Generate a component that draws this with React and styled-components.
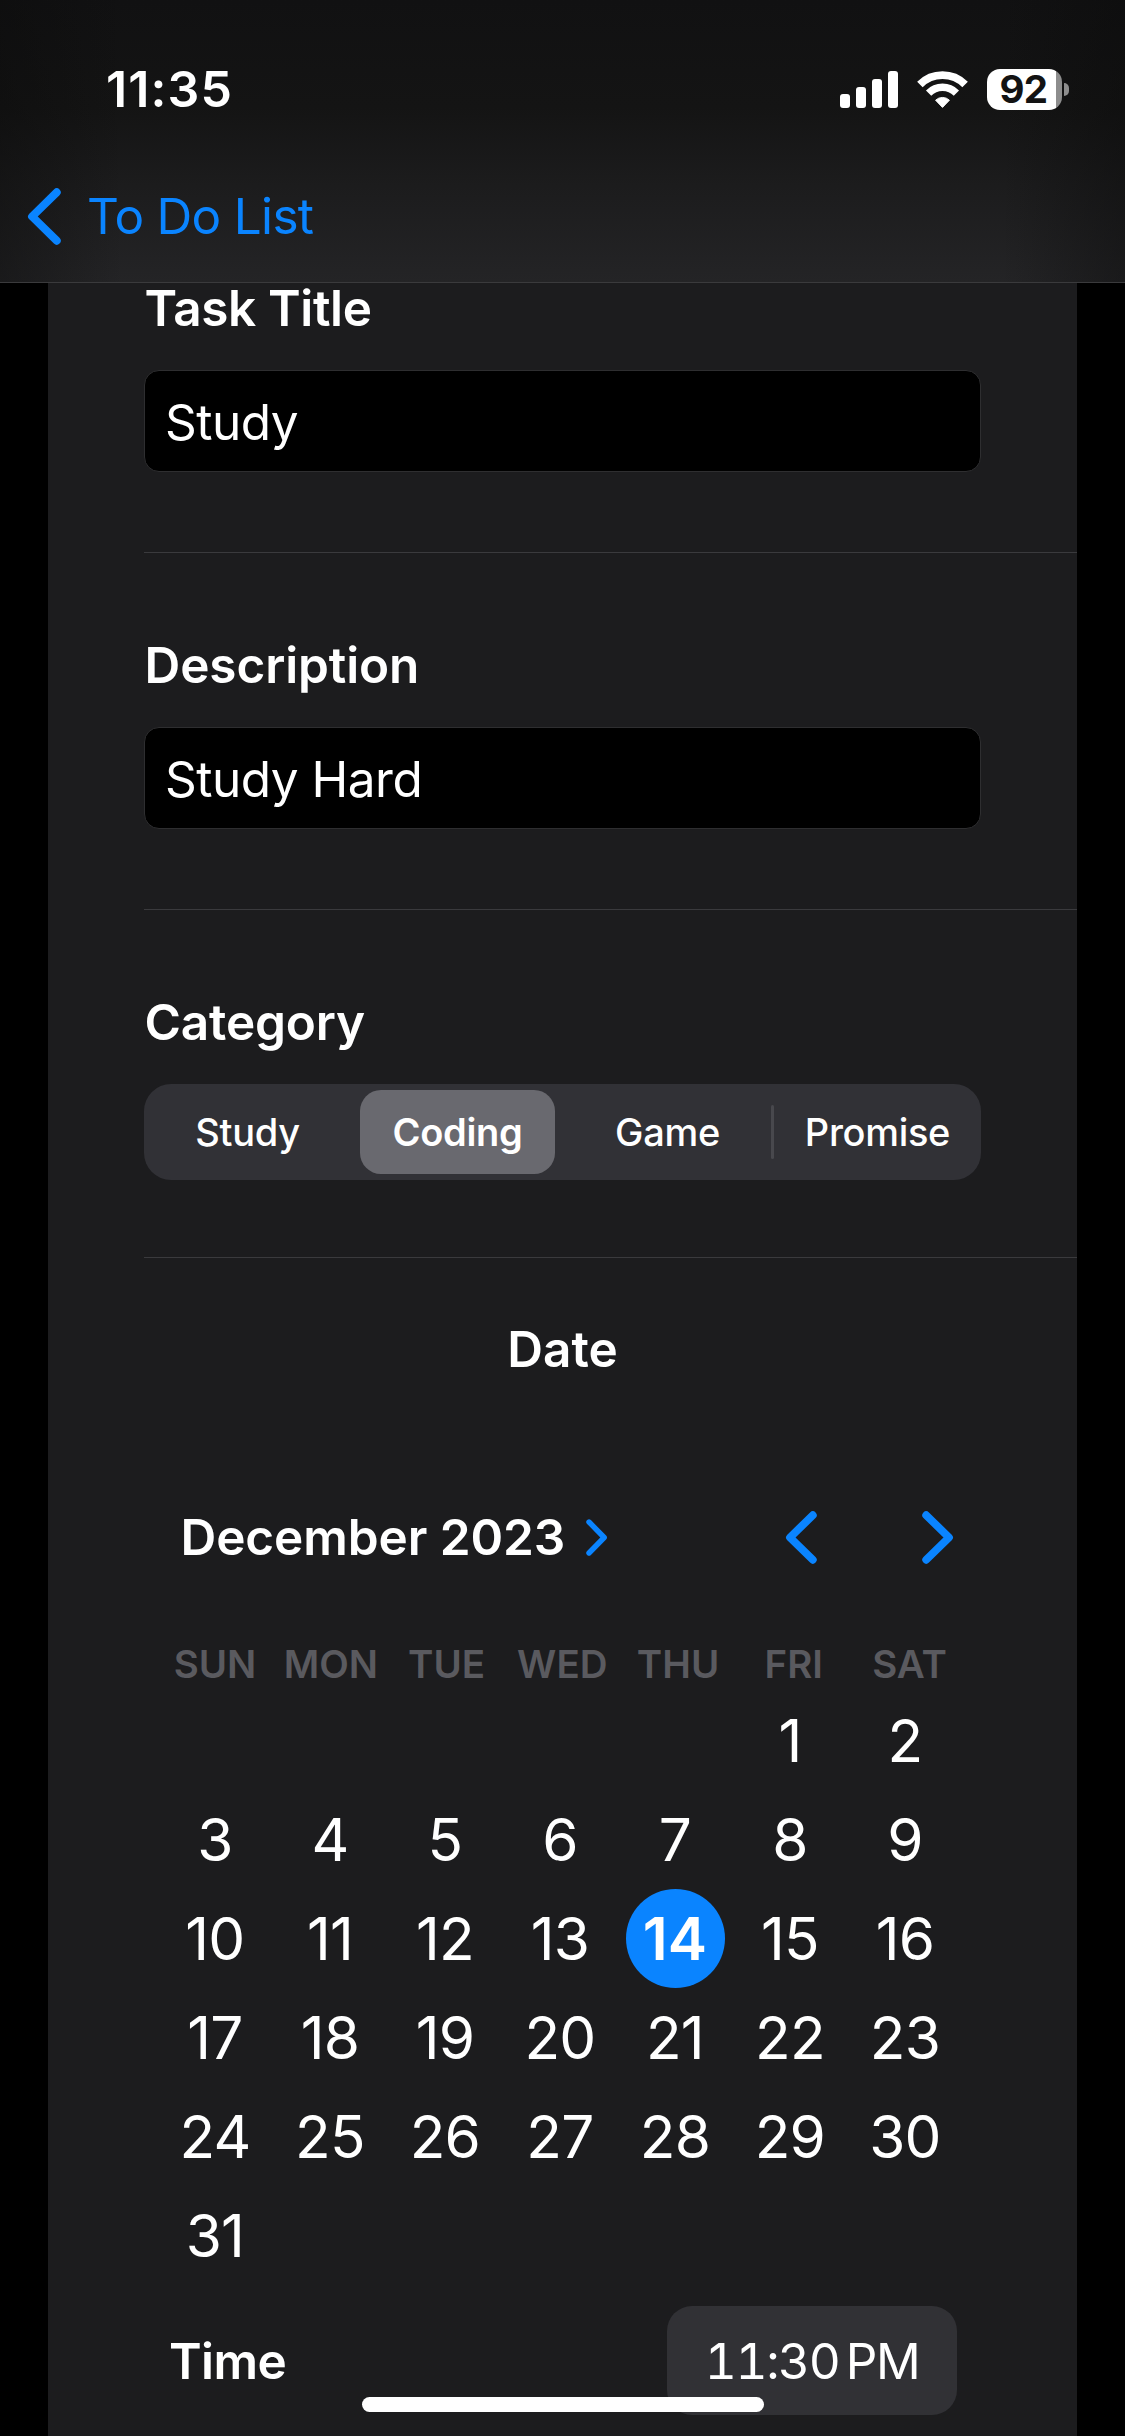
import React, { useState } from 'react';
import styled, { createGlobalStyle, css } from 'styled-components';

const BLUE = '#0a84ff';

const GlobalStyle = createGlobalStyle`
  *, *::before, *::after { box-sizing: border-box; }
  html, body { margin: 0; background: #000; }
  body { overflow: hidden; }
  button, input { font: inherit; color: inherit; border: 0; background: none; padding: 0; margin: 0; letter-spacing: inherit; }
`;

const Screen = styled.div`
  position: relative;
  width: 1125px;
  height: 2436px;
  overflow: hidden;
  background: #000;
  color: #fff;
  font-family: Inter, "Liberation Sans", sans-serif;
  font-size: 49.5px;
  line-height: 60px;
`;

const Header = styled.header`
  position: relative;
  z-index: 2;
  height: 283px;
  padding-top: 59px;
  border-bottom: 1px solid #3a3a3c;
  background:
    linear-gradient(90deg, rgba(10, 10, 10, 0.4), rgba(10, 10, 10, 0) 11%, rgba(10, 10, 10, 0) 89%, rgba(10, 10, 10, 0.4)),
    linear-gradient(180deg, #111112 0%, #141414 38%, #1c1c1d 66%, #242426 100%);
`;

const StatusBar = styled.div`
  display: flex;
  align-items: center;
  height: 60px;
  padding: 0 56px 0 106px;
`;

const Clock = styled.span`
  margin-right: auto;
  font-size: 50px;
  font-weight: 600;
  letter-spacing: 1.1px;
`;

const StatusIcons = styled.div`
  display: flex;
  align-items: center;
  gap: 19px;
`;

const Battery = styled.div`
  display: flex;
  align-items: center;
  gap: 2px;
`;

const BatteryBody = styled.div`
  display: grid;
  place-items: center;
  width: 75px;
  height: 41px;
  padding-right: 2px;
  border-radius: 13px;
  background: linear-gradient(90deg, #fff 69px, #8d8d8d 69px);
  color: #131313;
  font-size: 38.5px;
  font-weight: 700;
  line-height: 41px;
  letter-spacing: -0.6px;
`;

const BatteryCap = styled.div`
  width: 5px;
  height: 13px;
  border-radius: 0 5px 5px 0;
  background: #8d8d8d;
`;

const BackButton = styled.button`
  display: flex;
  align-items: center;
  gap: 26px;
  height: 60px;
  margin: 67px 0 0 27px;
  color: ${BLUE};
  letter-spacing: -0.7px;
`;

const Card = styled.main`
  width: 1029px;
  height: 2300px;
  margin: -87px 0 0 48px;
  background: #1c1c1e;
`;

const Section = styled.section`
  margin-left: 96px;
  padding: 82px 96px ${(p) => p.$bottom || 80}px 0;
  border-bottom: 1px solid #3a3a3d;
`;

const Label = styled.h2`
  margin: 0 0 ${(p) => p.$gap || 0}px;
  font-size: inherit;
  font-weight: 600;
  letter-spacing: ${(p) => p.$track || 0}px;
`;

const SectionLabel = styled(Label)`
  padding-left: 0.6px;
`;

const Field = styled.input`
  display: block;
  width: 100%;
  height: 102px;
  padding: 1px 20px 0;
  border: 1px solid #2e2e30;
  border-radius: 15px;
  background: #000;
  outline: none;
  letter-spacing: -0.5px;
`;

const Segments = styled.div`
  display: flex;
  align-items: center;
  height: 96px;
  padding: 6px;
  border-radius: 27px;
  background: #313136;
  font-size: 38px;
  font-weight: 500;
`;

const Segment = styled.button`
  flex: 1;
  height: 84px;
  border-radius: 21px;
  letter-spacing: -0.3px;
  ${(p) => p.$active && css`
    background: #69696f;
    font-weight: 600;
  `}
`;

const SegmentRule = styled.i`
  width: 3px;
  height: 54px;
  margin: 0 6px;
  border-radius: 2px;
  background: ${(p) => (p.$visible ? '#48484d' : 'transparent')};
`;

const DateSection = styled.section`
  padding-top: 61px;
`;

const CenterLabel = styled(Label)`
  text-align: center;
`;

const MonthBar = styled.div`
  display: flex;
  align-items: center;
  height: 60px;
  margin-top: 128px;
  padding: 0 123.5px 0 132.5px;
`;

const MonthButton = styled.button`
  display: flex;
  align-items: center;
  gap: 21px;
  margin-right: auto;
  font-weight: 600;
  letter-spacing: -0.08px;
`;

const ArrowButton = styled.button`
  display: flex;
  & + & { margin-left: 105px; }
`;

const Weekdays = styled.div`
  display: grid;
  grid-template-columns: repeat(7, 115.75px);
  margin: 73px 0 3px 109.2px;
  color: #5a5a5f;
  font-size: 38.5px;
  font-weight: 600;
  line-height: 48px;
  text-align: center;
`;

const Days = styled.div`
  display: grid;
  grid-template-columns: repeat(7, 115px);
  grid-auto-rows: 99px;
  justify-items: center;
  margin-left: 110px;
`;

const Day = styled.button`
  width: 99px;
  height: 99px;
  border-radius: 50%;
  font-size: 58.5px;
  letter-spacing: -0.8px;
  text-indent: -1.2px;
  grid-column-start: ${(p) => p.$first || 'auto'};
  ${(p) => p.$selected && css`
    background: ${BLUE};
    font-size: 59px;
    font-weight: 600;
    letter-spacing: 0;
  `}
`;

const TimeRow = styled.div`
  display: flex;
  align-items: center;
  justify-content: space-between;
  margin-top: 21px;
  padding: 0 120px 0 121px;
`;

const TimeButton = styled.button`
  width: 290px;
  height: 109px;
  border-radius: 25px;
  background: #313135;
  font-variant-numeric: tabular-nums;
  letter-spacing: -1.4px;
  word-spacing: -5.6px;
`;

const HomeIndicator = styled.div`
  position: absolute;
  z-index: 3;
  left: 362px;
  bottom: 24px;
  width: 402px;
  height: 15px;
  border-radius: 8px;
  background: #fff;
`;

function Chevron({ w, h, stroke, right }) {
  const r = stroke / 2 + 0.3;
  const pts = right
    ? `${r},${r} ${w - r - 0.8},${h / 2} ${r},${h - r}`
    : `${w - r},${r} ${r + 0.8},${h / 2} ${w - r},${h - r}`;
  return (
    <svg width={w} height={h} viewBox={`0 0 ${w} ${h}`} fill="none" stroke={BLUE}
      strokeWidth={stroke} strokeLinecap="round" strokeLinejoin="round">
      <polyline points={pts} />
    </svg>
  );
}

function Signal() {
  return (
    <svg width="58" height="37" viewBox="0 0 58 37" fill="#fff">
      <rect x="0" y="23" width="10" height="14" rx="3" />
      <rect x="16" y="16" width="10" height="21" rx="3" />
      <rect x="32" y="8" width="10" height="29" rx="3" />
      <rect x="48" y="0" width="10" height="37" rx="3" />
    </svg>
  );
}

function Wifi() {
  return (
    <svg width="51" height="37" viewBox="0 0 51 37" fill="none" stroke="#fff">
      <path d="M2.9 13.4A32 32 0 0 1 48.1 13.4" strokeWidth="7.8" />
      <path d="M11.6 22.1A19.6 19.6 0 0 1 39.4 22.1" strokeWidth="7.4" />
      <path d="M18.6 29.2A10 10 0 0 1 32.4 29.2L25.5 36.4Z" fill="#fff" strokeWidth="1" strokeLinejoin="round" />
    </svg>
  );
}

const CATEGORIES = ['Study', 'Coding', 'Game', 'Promise'];
const WEEKDAYS = ['SUN', 'MON', 'TUE', 'WED', 'THU', 'FRI', 'SAT'];
const DAYS = Array.from({ length: 31 }, (_, i) => i + 1);

export default function App() {
  const [title, setTitle] = useState('Study');
  const [description, setDescription] = useState('Study Hard');
  const [category, setCategory] = useState(1);
  const [day, setDay] = useState(14);

  return (
    <Screen>
      <GlobalStyle />
      <Header>
        <StatusBar>
          <Clock>11:35</Clock>
          <StatusIcons>
            <Signal />
            <Wifi />
            <Battery>
              <BatteryBody>92</BatteryBody>
              <BatteryCap />
            </Battery>
          </StatusIcons>
        </StatusBar>
        <BackButton>
          <Chevron w={34} h={57} stroke={8} />
          To Do List
        </BackButton>
      </Header>

      <Card>
        <Section>
          <SectionLabel $gap={32} $track={-0.38}>Task Title</SectionLabel>
          <Field value={title} onChange={(e) => setTitle(e.target.value)} />
        </Section>
        <Section>
          <SectionLabel $gap={32} $track={-0.12}>Description</SectionLabel>
          <Field value={description} onChange={(e) => setDescription(e.target.value)} />
        </Section>
        <Section $bottom={77}>
          <SectionLabel $gap={32} $track={-0.2}>Category</SectionLabel>
          <Segments>
            {CATEGORIES.map((name, i) => (
              <React.Fragment key={name}>
                {i > 0 && <SegmentRule $visible={category !== i && category !== i - 1} />}
                <Segment $active={category === i} onClick={() => setCategory(i)}>{name}</Segment>
              </React.Fragment>
            ))}
          </Segments>
        </Section>

        <DateSection>
          <CenterLabel>Date</CenterLabel>
          <MonthBar>
            <MonthButton>
              December 2023
              <Chevron w={22} h={37} stroke={5.4} right />
            </MonthButton>
            <ArrowButton><Chevron w={32} h={53} stroke={7.8} /></ArrowButton>
            <ArrowButton><Chevron w={32} h={53} stroke={7.8} right /></ArrowButton>
          </MonthBar>
          <Weekdays>
            {WEEKDAYS.map((name) => <span key={name}>{name}</span>)}
          </Weekdays>
          <Days>
            {DAYS.map((n) => (
              <Day key={n} $first={n === 1 ? 6 : 0} $selected={n === day} onClick={() => setDay(n)}>{n}</Day>
            ))}
          </Days>
          <TimeRow>
            <Label $track={-0.6}>Time</Label>
            <TimeButton>11:30 PM</TimeButton>
          </TimeRow>
        </DateSection>
      </Card>
      <HomeIndicator />
    </Screen>
  );
}
